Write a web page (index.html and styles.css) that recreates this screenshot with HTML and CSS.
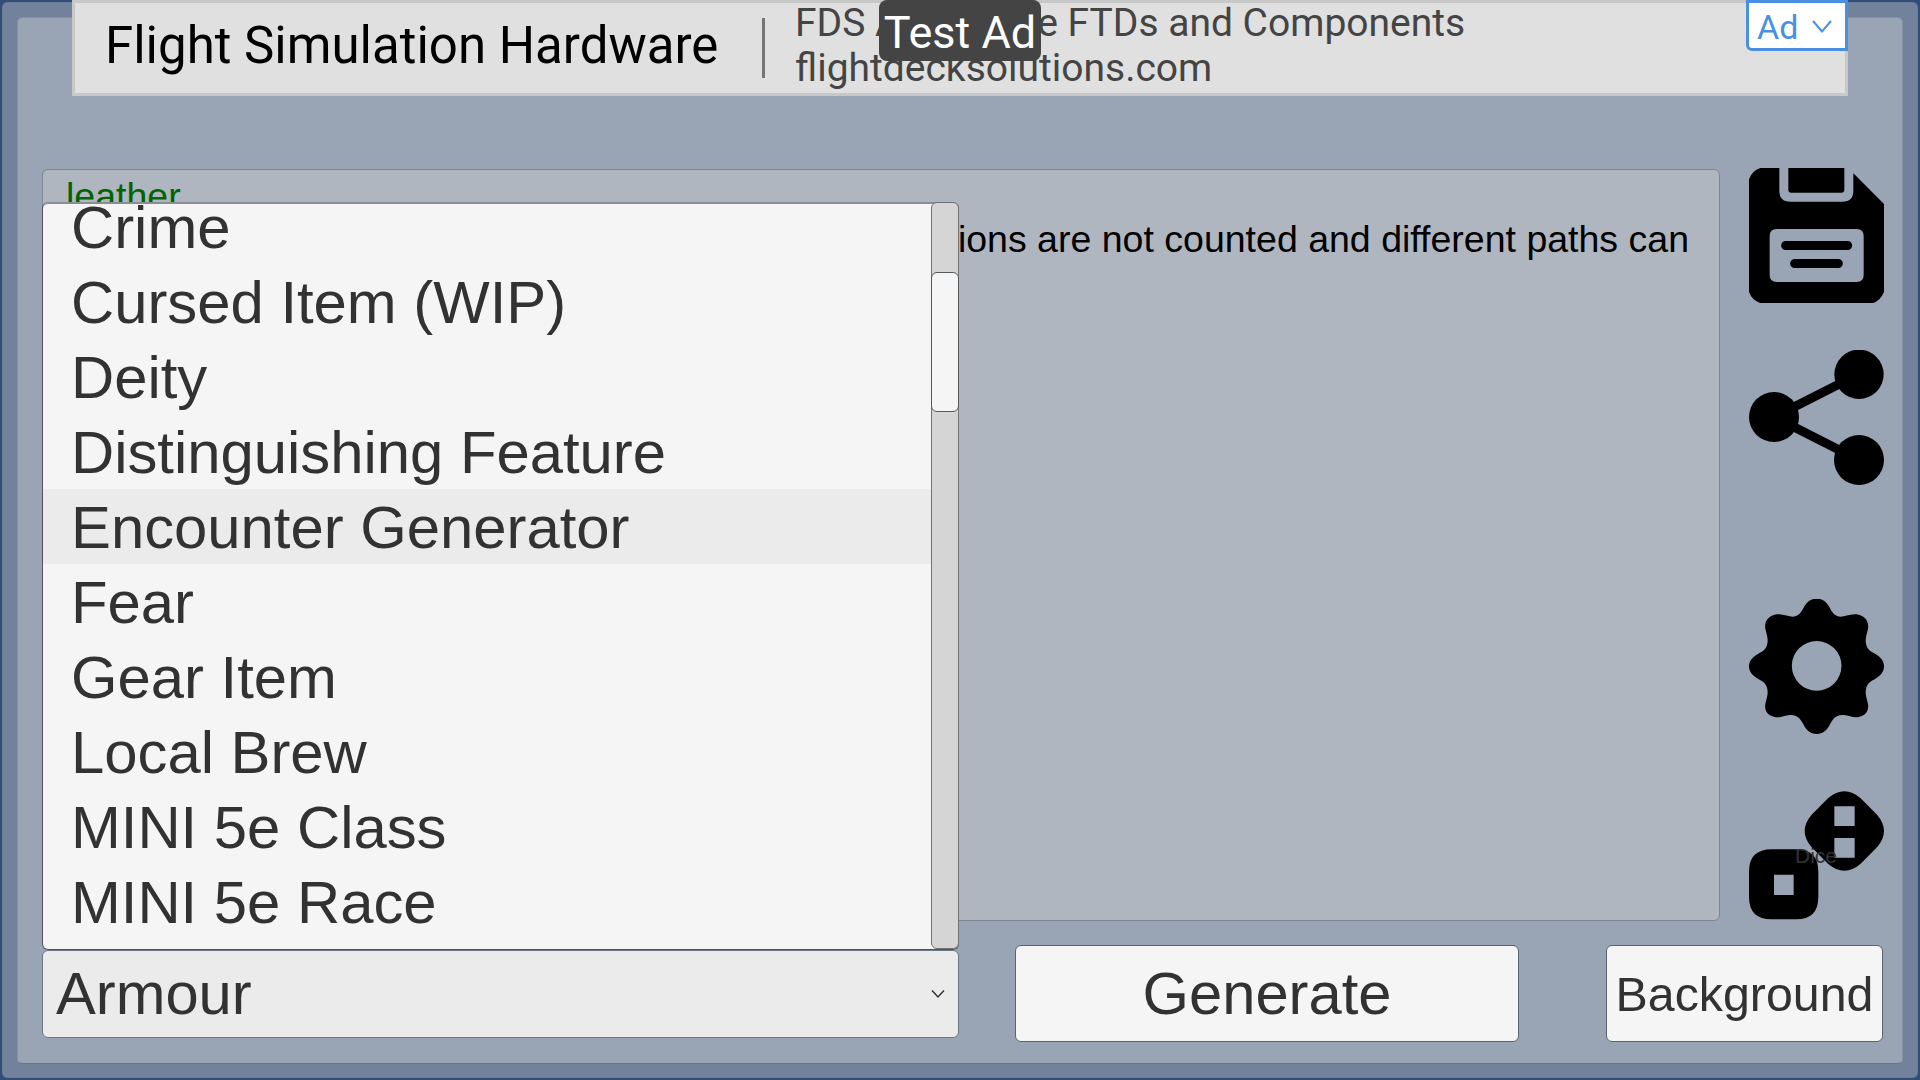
FILE: index.html
```html
<!DOCTYPE html>
<html lang="en">
<head>
<meta charset="utf-8">
<title>Generator</title>
<link rel="stylesheet" href="styles.css">
</head>
<body>
<div class="frame">
  <main class="app">
    <div class="workspace">
      <section class="output">
        <p class="material">leather</p>
        <p class="note">ions are not counted and different paths can</p>
      </section>
      <nav class="tools">
        <button class="tool save" aria-label="Save">
          <svg viewBox="87 54 405 405"><path fill-rule="evenodd" d="M121 54H178V122Q178 155 211 155H367Q400 155 400 122V70L492 162V426Q480 453 459 459H120Q96 450 87 426V88Q96 62 121 54ZM170 237Q149 237 149 258V375Q149 396 170 396H410Q431 396 431 375V258Q431 237 410 237Z"/><path d="M205 54H373V119Q373 128 364 128H214Q205 128 205 119Z"/><path d="M197 286.500H383M224 340.500H355" stroke="#000" stroke-width="27" stroke-linecap="round"/></svg>
        </button>
        <button class="tool share" aria-label="Share">
          <svg viewBox="87 600 405 405"><path d="M417 672L163 801L417 930" fill="none" stroke="#000" stroke-width="27"/><circle cx="417" cy="673" r="74"/><circle cx="162" cy="801" r="75"/><circle cx="417" cy="930" r="75"/></svg>
        </button>
        <button class="tool gear" aria-label="Settings">
          <svg viewBox="87 57 405 405"><path fill-rule="evenodd" d="M290 56C309 56 321 67 330 85C340 104 350 113 371 109C389 105 399 101 416 104C438 109 447 127 444 146C440 164 435 175 438 191C442 209 451 213 465 221C482 231 492 242 492 259C492 276 482 287 465 297C451 305 442 309 438 327C435 343 440 354 444 372C447 391 438 407 416 411C399 414 389 407 371 405C350 403 340 414 330 433C321 451 309 462 290 462C271 462 259 451 250 433C240 414 230 403 209 405C191 407 181 414 164 411C142 407 133 391 136 372C140 354 145 343 142 327C138 309 129 305 115 297C98 287 87 276 87 259C87 242 98 231 115 221C129 213 138 209 142 191C145 175 140 164 136 146C133 127 142 109 164 104C181 101 191 105 209 109C230 113 240 104 250 85C259 67 271 56 290 56ZM290 183A74.500 74.500 0 1 0 290 332A74.500 74.500 0 1 0 290 183Z"/></svg>
        </button>
        <button class="tool dice" aria-label="Dice">
          <svg viewBox="87 630 405 387"><path fill-rule="evenodd" d="M155 805H228Q295 805 295 872V948Q295 1015 228 1015H155Q87 1015 87 948V872Q87 805 155 805ZM162 881H221V942H162ZM324 652Q373 610 422 652L471 701Q513 750 471 799L422 848Q373 890 324 848L275 799Q233 750 275 701ZM343 676H404V735H343ZM343 771H404V830H343Z"/></svg>
          <span class="tool-label">Dice</span>
        </button>
      </nav>
    </div>
    <footer class="controls">
      <div class="picker">
        <ul class="menu">
          <li>Crime</li>
          <li>Cursed Item (WIP)</li>
          <li>Deity</li>
          <li>Distinguishing Feature</li>
          <li class="active">Encounter Generator</li>
          <li>Fear</li>
          <li>Gear Item</li>
          <li>Local Brew</li>
          <li>MINI 5e Class</li>
          <li>MINI 5e Race</li>
        </ul>
        <div class="scrollbar"><div class="thumb"></div></div>
        <div class="field"><span>Armour</span>
          <svg class="chevron" viewBox="0 0 14 10"><path d="M1 1.500L7 8L13 1.500"/></svg>
        </div>
      </div>
      <button class="btn generate">Generate</button>
      <button class="btn background">Background</button>
    </footer>
  </main>
</div>
<aside class="ad">
  <div class="ad-title">Flight Simulation Hardware</div>
  <div class="ad-rule"></div>
  <div class="ad-copy"><div>FDS Affordable FTDs and Components</div><div>flightdecksolutions.com</div></div>
  <div class="ad-test">Test Ad</div>
  <div class="ad-choice"><span>Ad</span><svg viewBox="0 0 20 13"><path d="M1 1L10 11.500L19 1"/></svg></div>
</aside>
</body>
</html>
```
FILE: styles.css
```css
* { box-sizing: border-box; }
body {
  margin: 0;
  width: 1920px;
  height: 1080px;
  padding: 2px;
  overflow: hidden;
  background: #314d76;
  font-family: "Liberation Sans", Arial, sans-serif;
  color: #323232;
}
p, ul { margin: 0; padding: 0; }
button { border: 0; padding: 0; margin: 0; background: none; font: inherit; color: inherit; }
svg { display: block; }

.frame {
  height: 1076px;
  padding: 14px;
  border: 1px solid #6a7d9d;
  border-radius: 5px;
  background: #73829b;
}
.app {
  height: 1047px;
  padding: 150px 18px 19px 24px;
  border: 1px solid #8390a6;
  border-bottom-color: #66758b;
  border-radius: 5px;
  background: #99a4b4;
  display: flex;
  flex-direction: column;
}
.workspace { display: flex; gap: 29px; height: 753px; }
.output {
  width: 1678px;
  height: 752px;
  margin-top: 1px;
  border: 1px solid #7d8791;
  border-radius: 6px;
  background: #b0b6c0;
  font-size: 37.500px;
  line-height: 43px;
  padding: 5px 30px 0 23px;
}
.material { color: #006400; }
.note { color: #000; text-align: right; white-space: nowrap; }

.tools { width: 135px; display: flex; flex-direction: column; }
.tool { position: relative; width: 135px; height: 135px; }
.tool svg { width: 100%; height: 100%; }
.share { margin-top: 47px; }
.gear { margin-top: 114px; }
.dice { height: 129px; margin-top: 57px; }
.tool-label { position: absolute; left: 46px; top: 53px; font-size: 21px; line-height: 24px; }

.controls { display: flex; align-items: flex-start; padding-top: 24px; }
.picker { position: relative; width: 917px; padding-top: 5px; }
.field {
  height: 88px;
  display: flex;
  align-items: center;
  justify-content: space-between;
  padding: 0 13px;
  border: 1px solid #6f767e;
  border-radius: 6px;
  background: #ebebeb;
  font-size: 59.700px;
  line-height: 70px;
}
.chevron { width: 14px; height: 10px; }
.chevron path { fill: none; stroke: #323232; stroke-width: 1.5; }
.menu {
  position: absolute;
  left: 0;
  bottom: 88px;
  width: 917px;
  height: 748px;
  overflow: hidden;
  display: flex;
  flex-direction: column;
  list-style: none;
  border: 1px solid #50555a;
  border-top: 2px solid #8a8e94;
  border-radius: 6px;
  background: #f5f5f5;
  font-size: 59.800px;
  line-height: 77px;
}
.menu li { flex: none; height: 75px; padding-left: 28px; white-space: nowrap; }
.menu li:first-child { margin-top: -15px; }
.active { background: #ebebeb; }
.scrollbar {
  position: absolute;
  right: 0;
  bottom: 89px;
  width: 28px;
  height: 747px;
  padding-top: 69px;
  border: 1px solid #6f7376;
  border-radius: 6px;
  background: #d5d5d5;
}
.thumb { width: 28px; height: 140px; margin-left: -1px; border: 1px solid #55595c; border-radius: 6px; background: #f5f5f5; }
.btn {
  height: 97px;
  border: 1px solid #5a6470;
  border-radius: 6px;
  background: #f5f5f5;
  white-space: nowrap;
}
.generate { width: 504px; margin-left: 56px; font-size: 59.700px; }
.background { width: 277px; margin-left: 87px; font-size: 48.300px; }

.ad {
  position: absolute;
  left: 72px;
  top: 0;
  width: 1776px;
  height: 96px;
  padding-left: 30px;
  display: flex;
  border: 3px solid #c8c8c8;
  background: #e0e0e0;
  font-family: Roboto, sans-serif;
  white-space: nowrap;
}
.ad-title { width: 657px; font-size: 51px; line-height: 60px; padding-top: 13px; color: #000; }
.ad-rule { width: 3px; height: 60px; margin-top: 15px; background: #757575; }
.ad-copy { padding: 0 0 0 30px; font-size: 39px; line-height: 45px; color: #444; margin-top: -2px; }
.ad-test {
  position: absolute;
  left: 804px;
  top: -3px;
  width: 162px;
  height: 61px;
  padding-top: 4px;
  border-radius: 8px;
  background: #444;
  color: #fff;
  font-size: 45px;
  line-height: 57px;
  text-align: center;
}
.ad-choice {
  position: absolute;
  right: -3px;
  top: -3px;
  width: 102px;
  height: 51px;
  display: flex;
  align-items: center;
  gap: 14px;
  padding: 2px 0 0 8px;
  border: 3px solid #4a90e2;
  border-bottom-left-radius: 6px;
  background: #fff;
  color: #4a90e2;
  font-size: 34px;
}
.ad-choice svg { width: 20px; height: 13px; margin-bottom: 1px; }
.ad-choice path { fill: none; stroke: #4a90e2; stroke-width: 2; }
```
